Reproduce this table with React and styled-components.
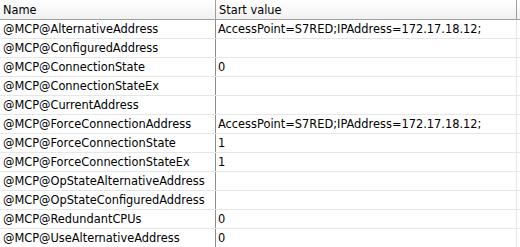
import styled, { createGlobalStyle } from "styled-components";

const GlobalStyle = createGlobalStyle`
  html, body {
    margin: 0;
    padding: 0;
    background: #ffffff;
  }
  body {
    font-family: "DejaVu Sans", Verdana, sans-serif;
    font-size: 11.4px;
    color: #000000;
  }
`;

const rows = [
  ["@MCP@AlternativeAddress", "AccessPoint=S7RED;IPAddress=172.17.18.12;"],
  ["@MCP@ConfiguredAddress", ""],
  ["@MCP@ConnectionState", "0"],
  ["@MCP@ConnectionStateEx", ""],
  ["@MCP@CurrentAddress", ""],
  ["@MCP@ForceConnectionAddress", "AccessPoint=S7RED;IPAddress=172.17.18.12;"],
  ["@MCP@ForceConnectionState", "1"],
  ["@MCP@ForceConnectionStateEx", "1"],
  ["@MCP@OpStateAlternativeAddress", ""],
  ["@MCP@OpStateConfiguredAddress", ""],
  ["@MCP@RedundantCPUs", "0"],
  ["@MCP@UseAlternativeAddress", "0"],
];

const Grid = styled.div`
  width: 520px;
  height: 247px;
  overflow: hidden;
  display: flex;
  flex-direction: column;
`;

const HeaderRow = styled.div`
  display: grid;
  grid-template-columns: 216px 301px 1fr;
  height: 19px;
  border-bottom: 1px solid #a0a0a0;
  background: linear-gradient(#ffffff, #f1f1f1);
`;

const HeaderCell = styled.div`
  line-height: 20px;
  padding-left: 3px;
  border-right: ${(p) => (p.$last ? "none" : "1px solid #a0a0a0")};
  white-space: nowrap;
`;

const Row = styled.div`
  display: grid;
  grid-template-columns: 216px 301px 1fr;
  height: 18px;
  border-bottom: 1px solid #e6e6e6;
`;

const Cell = styled.div`
  line-height: 19px;
  padding-left: ${(p) => (p.$value ? "2px" : "3px")};
  border-right: 1px solid ${(p) => (p.$value ? "#e6e6e6" : "#8c8c8c")};
  white-space: nowrap;
  overflow: hidden;
`;

export default function App() {
  return (
    <>
      <GlobalStyle />
      <Grid>
        <HeaderRow>
          <HeaderCell>Name</HeaderCell>
          <HeaderCell>Start value</HeaderCell>
          <HeaderCell $last />
        </HeaderRow>
        {rows.map(([name, value]) => (
          <Row key={name}>
            <Cell>{name}</Cell>
            <Cell $value>{value}</Cell>
            <div />
          </Row>
        ))}
      </Grid>
    </>
  );
}
